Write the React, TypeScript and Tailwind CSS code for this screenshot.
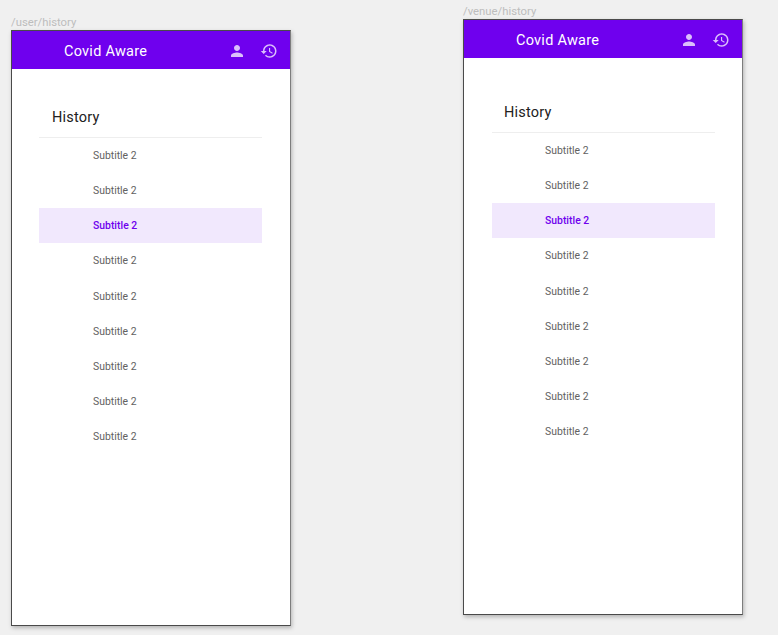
import React from "react";

const rows = [0, 1, 2, 3, 4, 5, 6, 7, 8];

function Frame({ label, top, head, list, row }: { label: string; top: string; head: string; list: string; row: string }) {
  return (
    <div className={`flex flex-col w-[280px] ${top}`}>
      <div className="h-[15px] text-[11.3px] leading-[15px] text-[#bdbdbd] font-['Roboto',sans-serif] whitespace-nowrap">{label}</div>
      <div className="h-[596px] w-[280px] flex flex-col bg-white border border-[#4a4a4a] border-r-[#7d7d7d] shadow-[1px_2px_4px_rgba(0,0,0,0.25)]">
        <div className="h-[38px] shrink-0 bg-[#6f00ee] flex items-center pl-[52px] pr-[12px]">
          <span className="mt-[3px] text-[14.5px] tracking-[0.25px] text-white font-['Roboto',sans-serif] whitespace-nowrap">Covid Aware</span>
          <div className="ml-auto mt-[2px] flex items-center gap-[14px] text-white/75">
            <svg width="18" height="18" viewBox="0 0 24 24" fill="currentColor">
              <path d="M12 12c2.21 0 4-1.79 4-4s-1.79-4-4-4-4 1.79-4 4 1.79 4 4 4zm0 2c-2.67 0-8 1.34-8 4v2h16v-2c0-2.66-5.33-4-8-4z" />
            </svg>
            <svg width="18" height="18" viewBox="0 0 24 24" fill="currentColor">
              <path d="M13 3c-4.97 0-9 4.03-9 9H1l3.89 3.89.07.14L9 12H6c0-3.87 3.13-7 7-7s7 3.13 7 7-3.13 7-7 7c-1.93 0-3.68-.79-4.94-2.06l-1.42 1.42C8.27 19.99 10.51 21 13 21c4.97 0 9-4.03 9-9s-4.03-9-9-9zm-1 5v5l4.28 2.54.72-1.21-3.5-2.08V8H12z" />
            </svg>
          </div>
        </div>
        <div className={`${list} flex flex-col`}>
          <div className={`${head} border-b border-[#eeeeee] text-[14.5px] leading-[20px] text-[#212121] tracking-[0.2px] font-['Roboto',sans-serif]`}>
            History
          </div>
          {rows.map((r) => (
            <div
              key={r}
              className={`h-[35.14px] flex items-center pt-[0.6px] ${row} text-[10.4px] font-['Roboto',sans-serif] ${
                r === 2 ? "font-medium bg-[#f1e8fd] text-[#6f00ee]" : "text-[#616161]"
              }`}
            >
              Subtitle 2
            </div>
          ))}
        </div>
      </div>
    </div>
  );
}

export default function App() {
  return (
    <div className="w-[778px] h-[635px] overflow-hidden bg-[#f0f0f0] flex items-start pl-[11px] gap-[172px]">
      <Frame label="/user/history" top="mt-[15px]" head="h-[69px] pt-[39px] pl-[13px]" list="ml-[27px] mr-[28px]" row="pl-[54px]" />
      <Frame label="/venue/history" top="mt-[4px]" head="h-[75px] pt-[45px] pl-[12px]" list="ml-[28px] mr-[27px]" row="pl-[53px]" />
    </div>
  );
}
